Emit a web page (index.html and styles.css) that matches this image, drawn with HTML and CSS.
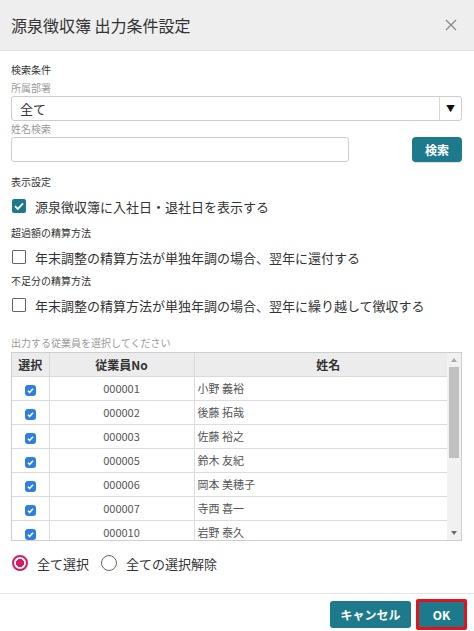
FILE: index.html
```html
<!DOCTYPE html>
<html lang="ja">
<head>
<meta charset="utf-8">
<title>源泉徴収簿 出力条件設定</title>
<link rel="stylesheet" href="styles.css">
</head>
<body>
<div class="dialog">
  <header class="dlg-head">
    <h1 class="dlg-title">源泉徴収簿 出力条件設定</h1>
    <button class="close" type="button" aria-label="閉じる">
      <svg width="12" height="12" viewBox="0 0 12 12"><path d="M1 1L11 11M11 1L1 11" stroke="#8a8a8a" stroke-width="1.3" fill="none"/></svg>
    </button>
  </header>

  <main class="dlg-body">
    <section class="search">
      <div class="sec-title">検索条件</div>
      <div class="field-label dept-label">所属部署</div>
      <div class="select">
        <span class="select-value">全て</span>
        <span class="select-arrow">▼</span>
      </div>
      <div class="field-label name-label">姓名検索</div>
      <div class="search-row">
        <input class="text-input" type="text">
        <button class="btn btn-search" type="button">検索</button>
      </div>
    </section>

    <section class="display">
      <div class="sec-title">表示設定</div>
      <label class="check-row first">
        <span class="box checked"><svg width="14" height="14" viewBox="0 0 14 14"><path d="M3 7.2L5.8 10L11 4.3" stroke="#fff" stroke-width="1.8" fill="none"/></svg></span>
        源泉徴収簿に入社日・退社日を表示する
      </label>
      <div class="sec-title gap-label">超過額の精算方法</div>
      <label class="check-row">
        <span class="box"></span>
        年末調整の精算方法が単独年調の場合、翌年に還付する
      </label>
      <div class="sec-title gap-label-s">不足分の精算方法</div>
      <label class="check-row">
        <span class="box"></span>
        年末調整の精算方法が単独年調の場合、翌年に繰り越して徴収する
      </label>
    </section>

    <section class="employees">
      <div class="field-label list-label">出力する従業員を選択してください</div>
      <div class="grid-wrap">
        <div class="grid-view">
          <table class="grid">
            <colgroup><col class="c-sel"><col class="c-no"><col></colgroup>
            <thead>
              <tr><th>選択</th><th>従業員No</th><th class="th-name">姓名</th></tr>
            </thead>
            <tbody>
              <tr><td class="sel"><span class="tick"></span></td><td class="no">000001</td><td>小野 義裕</td></tr>
              <tr><td class="sel"><span class="tick"></span></td><td class="no">000002</td><td>後藤 拓哉</td></tr>
              <tr><td class="sel"><span class="tick"></span></td><td class="no">000003</td><td>佐藤 裕之</td></tr>
              <tr><td class="sel"><span class="tick"></span></td><td class="no">000005</td><td>鈴木 友紀</td></tr>
              <tr><td class="sel"><span class="tick"></span></td><td class="no">000006</td><td>岡本 美穂子</td></tr>
              <tr><td class="sel"><span class="tick"></span></td><td class="no">000007</td><td>寺西 喜一</td></tr>
              <tr><td class="sel"><span class="tick"></span></td><td class="no">000010</td><td>岩野 泰久</td></tr>
            </tbody>
          </table>
        </div>
        <div class="vscroll" aria-hidden="true">
          <span class="vs-btn"><svg width="6" height="4" viewBox="0 0 6 4"><path d="M0 4L3 0L6 4Z" fill="#a8a8a8"/></svg></span>
          <span class="vs-track"><span class="vs-thumb"></span></span>
          <span class="vs-btn"><svg width="6" height="4" viewBox="0 0 6 4"><path d="M0 0L3 4L6 0Z" fill="#6e6e6e"/></svg></span>
        </div>
      </div>
      <div class="radio-row">
        <label class="radio-opt"><span class="radio on"></span>全て選択</label>
        <label class="radio-opt"><span class="radio"></span>全ての選択解除</label>
      </div>
    </section>
  </main>

  <footer class="dlg-foot">
    <button class="btn btn-cancel" type="button">キャンセル</button>
    <button class="btn btn-ok" type="button">OK</button>
  </footer>
</div>
</body>
</html>
```

FILE: styles.css
```css
* { box-sizing: border-box; }

html, body {
  margin: 0;
  background: #fff;
}

body {
  font-family: "Noto Sans CJK JP", "Noto Sans", sans-serif;
  color: #333;
}

.dialog {
  width: 474px;
  height: 631px;
  display: flex;
  flex-direction: column;
  overflow: hidden;
}

/* title bar */
.dlg-head {
  height: 51px;
  flex: none;
  background: #eeeeee;
  border-bottom: 1px solid #e2e2e2;
  display: flex;
  align-items: center;
  justify-content: space-between;
  padding: 0 17px 0 11px;
}

.dlg-title {
  margin: 0;
  font-size: 16px;
  font-weight: 400;
  line-height: 1;
  color: #333;
}

.close {
  border: 0;
  background: none;
  padding: 0;
  width: 12px;
  height: 12px;
  display: flex;
}

/* body */
.dlg-body {
  flex: 1;
  padding: 12px 12px 0 11px;
}

.sec-title,
.field-label {
  font-size: 10px;
  line-height: 14px;
  white-space: nowrap;
}

.sec-title { color: #333; }
.field-label { color: #9a9a9a; }

.dept-label { margin-top: 4px; }
.name-label { margin-top: 1px; }

.select {
  margin-top: 1px;
  height: 25px;
  border: 1px solid #cccccc;
  border-radius: 3px;
  display: flex;
  align-items: stretch;
  font-size: 13px;
}

.select-value {
  flex: 1;
  padding-left: 8px;
  display: flex;
  align-items: center;
  color: #333;
}

.select-arrow {
  width: 22px;
  border-left: 1px solid #d6d6d6;
  display: flex;
  align-items: center;
  justify-content: center;
  font-size: 9px;
  color: #111;
}

.search-row {
  margin-top: 1px;
  height: 25px;
  display: flex;
  justify-content: space-between;
}

.text-input {
  width: 338px;
  height: 25px;
  border: 1px solid #cccccc;
  border-radius: 3px;
  padding: 0 6px;
  font: inherit;
  font-size: 13px;
}

.btn {
  border: 0;
  border-radius: 3px;
  background: #1d7a8c;
  color: #fff;
  font-family: inherit;
  font-weight: 700;
  font-size: 12px;
  padding: 0;
  display: flex;
  align-items: center;
  justify-content: center;
}

.btn-search {
  width: 50px;
  height: 25px;
  border-radius: 4px;
  box-shadow: 0 1px 1px rgba(0, 0, 0, 0.15);
}

/* display settings */
.display { margin-top: 13px; }

.check-row {
  height: 20px;
  margin-top: 7px;
  display: flex;
  align-items: center;
  gap: 9px;
  font-size: 13px;
  color: #333;
  white-space: nowrap;
}

.gap-label { margin-top: 10px; }
.gap-label-s { margin-top: 7px; }

.box {
  width: 14px;
  height: 14px;
  margin-left: 1px;
  flex: none;
  border: 1.5px solid #666;
  border-radius: 1px;
  display: flex;
}

.box.checked {
  border: 0;
  background: #1d7a8c;
  border-radius: 2px;
}

/* employee list */
.list-label { margin-top: 21px; }

.grid-wrap {
  margin-top: 2px;
  height: 189px;
  border: 1px solid #cfcfcf;
  display: flex;
}

.grid-view {
  flex: 1;
  min-width: 0;
  overflow: hidden;
}

.vscroll {
  width: 14px;
  flex: none;
  background: #f1f1f1;
  display: flex;
  flex-direction: column;
}

.vs-btn {
  height: 14px;
  flex: none;
  display: flex;
  align-items: center;
  justify-content: center;
}

.vs-track {
  flex: 1;
  padding: 0 2px;
}

.vs-thumb {
  display: block;
  height: 91px;
  background: #c1c1c1;
}

.grid {
  width: 100%;
  border-collapse: collapse;
  table-layout: fixed;
  font-size: 11px;
}

.c-sel { width: 37px; }
.c-no { width: 145px; }

.grid th {
  height: 23px;
  background: #ececec;
  font-weight: 700;
  font-size: 12px;
  color: #333;
  border-right: 1px solid #d9d9d9;
  border-bottom: 1px solid #d9d9d9;
  padding: 0;
  text-align: center;
}

.grid th:last-child { border-right: 0; }
.grid .th-name { padding-left: 15px; }

.grid td {
  height: 24px;
  padding: 0 3px;
  border-right: 1px solid #dcdcdc;
  border-bottom: 1px solid #dcdcdc;
  color: #555;
  white-space: nowrap;
}

.grid td:last-child { border-right: 0; }

.grid td.sel,
.grid td.no {
  text-align: center;
  padding: 0;
}

.tick {
  display: inline-block;
  vertical-align: middle;
  width: 11px;
  height: 11px;
  border-radius: 3px;
  background: #2f7fe0 url("data:image/svg+xml;utf8,<svg xmlns='http://www.w3.org/2000/svg' width='11' height='11' viewBox='0 0 11 11'><path d='M3 5.8L4.7 7.4L8 3.8' stroke='white' stroke-width='1.6' fill='none'/></svg>") no-repeat center;
}

/* select-all radios */
.radio-row {
  margin-top: 12px;
  height: 20px;
  display: flex;
  align-items: center;
  gap: 12px;
  padding-left: 1px;
}

.radio-opt {
  display: flex;
  align-items: center;
  gap: 9px;
  font-size: 13px;
  color: #333;
}

.radio {
  width: 16px;
  height: 16px;
  border-radius: 50%;
  border: 1.5px solid #666;
  flex: none;
}

.radio.on {
  border: 2px solid #d81b60;
  background: radial-gradient(circle, #d81b60 0 3.8px, #fff 4.3px);
}

/* footer buttons */
.dlg-foot {
  flex: none;
  height: 38px;
  border-top: 1px solid #e4e4e4;
  display: flex;
  justify-content: flex-end;
  align-items: flex-start;
  gap: 5px;
  padding: 5px 7px 0 0;
}

.btn-cancel {
  width: 81px;
  height: 27px;
  margin-top: 2px;
}

.btn-ok {
  width: 51px;
  height: 31px;
  border: 3px solid #e3121b;
  border-radius: 2px;
}
```
